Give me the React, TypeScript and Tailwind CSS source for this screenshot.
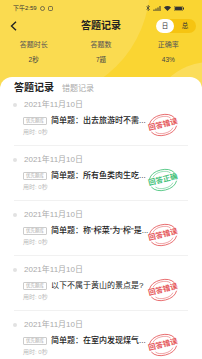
import React from "react";

const items = [
  { q: "简单题：出去旅游时不需...", ok: false, bold: true },
  { q: "简单题：所有鱼类肉生吃...", ok: true, bold: true },
  { q: "简单题：称“榨菜”为“榨”是...", ok: false, bold: true },
  { q: "以下不属于黄山的景点是?", ok: false, bold: false },
  { q: "简单题：在室内发现煤气...", ok: false, bold: true },
];

function Stamp({ ok }: { ok: boolean }) {
  const c = ok ? "#45c27a" : "#e5575a";
  return (
    <div className="absolute right-[7px] top-[12px] w-[36px] h-[26px] rotate-[-14deg]">
      <svg width="36" height="26" viewBox="0 0 36 26" className="absolute left-0 top-0">
        <path d="M5 9 A14 10 0 0 1 31 9" fill="none" stroke={c} strokeWidth="0.8" />
        <path d="M9 8 A10 6 0 0 1 27 8" fill="none" stroke={c} strokeWidth="0.5" />
        <path d="M5 17 A14 10 0 0 0 31 17" fill="none" stroke={c} strokeWidth="0.8" />
        <path d="M9 18 A10 6 0 0 0 27 18" fill="none" stroke={c} strokeWidth="0.5" />
      </svg>
      <div
        className="absolute left-0 top-[8px] w-[36px] h-[10px] flex items-center justify-center text-[7.5px] leading-none font-bold"
        style={{ color: c }}
      >
        {ok ? "回答正确" : "回答错误"}
      </div>
    </div>
  );
}

export default function App() {
  return (
    <div
      className="relative w-[202px] h-[359px] overflow-hidden bg-[#fad532]"
      style={{ fontFamily: '"Liberation Sans", "Noto Sans CJK SC", sans-serif' }}
    >
      {/* decorative circles */}
      <div className="absolute left-[-80px] top-[-130px] w-[230px] h-[230px] rounded-full bg-white/15" />
      <div className="absolute left-[150px] top-[62px] w-[120px] h-[120px] rounded-full bg-white/20" />

      <div className="relative">
        {/* status bar */}
        <div className="h-[16px] flex items-center justify-between px-[13px] text-[6px] text-[#333]">
          <div className="flex items-center gap-[3px]">
            <span className="leading-none">下午2:59</span>
            <svg width="5" height="5" viewBox="0 0 10 10"><circle cx="5" cy="5" r="4" fill="none" stroke="#444" strokeWidth="1.4" /></svg>
            <svg width="5" height="5" viewBox="0 0 10 10"><rect x="1" y="1" width="8" height="8" rx="2" fill="none" stroke="#444" strokeWidth="1.4" /></svg>
          </div>
          <div className="flex items-center gap-[3px] mr-[5px]">
            <svg width="4" height="6" viewBox="0 0 8 12"><path d="M1 3 L7 9 L4 11 V1 L7 3 L1 9" fill="none" stroke="#333" strokeWidth="1.3" /></svg>
            <svg width="8" height="5" viewBox="0 0 16 10"><path d="M1 10 H3 V7 H1Z M5 10 H7 V5 H5Z M9 10 H11 V3 H9Z M13 10 H15 V0 H13Z" fill="#333" /></svg>
            <svg width="7" height="5" viewBox="0 0 14 10"><path d="M7 10 L0 3 A10 10 0 0 1 14 3 Z" fill="#333" /></svg>
            <svg width="10" height="5" viewBox="0 0 20 10"><rect x="0.5" y="0.5" width="17" height="9" rx="2" fill="none" stroke="#333" /><rect x="2" y="2" width="14" height="6" rx="1" fill="#333" /><rect x="18" y="3" width="2" height="4" fill="#333" /></svg>
          </div>
        </div>

        {/* header */}
        <div className="relative h-[20px] flex items-center justify-center">
          <svg className="absolute left-[10px] top-[5px]" width="7" height="10" viewBox="0 0 7 10">
            <path d="M6 0.8 L1.5 5 L6 9.2" fill="none" stroke="#222" strokeWidth="1.4" />
          </svg>
          <span className="text-[10px] font-bold text-[#222] leading-none">答题记录</span>
          <div className="absolute left-[156px] top-[3px] w-[40px] h-[14px] rounded-full bg-[#f6c411] flex items-center">
            <div className="w-[18px] h-[14px] rounded-full bg-white flex items-center justify-center text-[6.5px] text-[#333] leading-none">日</div>
            <div className="flex-1 flex items-center justify-center text-[6.5px] text-[#333] leading-none">总</div>
          </div>
        </div>

        {/* stats */}
        <div className="grid grid-cols-3 mt-[5px] text-center">
          {[
            ["答题时长", "2秒"],
            ["答题数", "7题"],
            ["正确率", "43%"],
          ].map(([l, v]) => (
            <div key={l} className="flex flex-col items-center">
              <span className="text-[7px] leading-[8px] text-[#555]">{l}</span>
              <span className="text-[6.5px] leading-[8px] text-[#444] mt-[7px]">{v}</span>
            </div>
          ))}
        </div>

        {/* card */}
        <div className="mt-[13px] bg-white rounded-t-[12px] px-[14px] pt-[5px] h-[300px]">
          <div className="flex items-end h-[12px]">
            <span className="text-[10px] leading-[12px] font-bold text-[#222]">答题记录</span>
            <span className="text-[8px] leading-[11px] text-[#aaa] ml-[8px]">错题记录</span>
          </div>
          <div className="mt-[6px]">
            {items.map((it, i) => (
              <div key={i} className={"relative " + (i > 0 ? "pt-[9px]" : "")}>
                <div className="relative">
                  <div className="flex items-center h-[10px]">
                    <div className="w-[4px] h-[4px] rounded-full bg-[#e2e2e2] ml-[-1px]" />
                    <span className="ml-[7px] text-[8px] leading-none text-[#aaa]">2021年11月10日</span>
                  </div>
                  <div className="flex items-center h-[10px] mt-[6px] ml-[9px]">
                    <span className="h-[8px] px-[2px] border-[0.7px] border-[#ccc] rounded-[1px] text-[4.5px] leading-none text-[#aaa] flex items-center">优先题库</span>
                    <span className={"ml-[4px] text-[8px] leading-none text-[#222] " + (it.bold ? "font-medium" : "")}>{it.q}</span>
                  </div>
                  <div className="h-[8px] mt-[2px] ml-[9px] flex items-center text-[6px] leading-none text-[#bbb]">用时: 0秒</div>
                  <Stamp ok={it.ok} />
                </div>
                <div className="mt-[9px] h-px bg-[#f1f1f1]" />
              </div>
            ))}
          </div>
        </div>
      </div>
    </div>
  );
}
